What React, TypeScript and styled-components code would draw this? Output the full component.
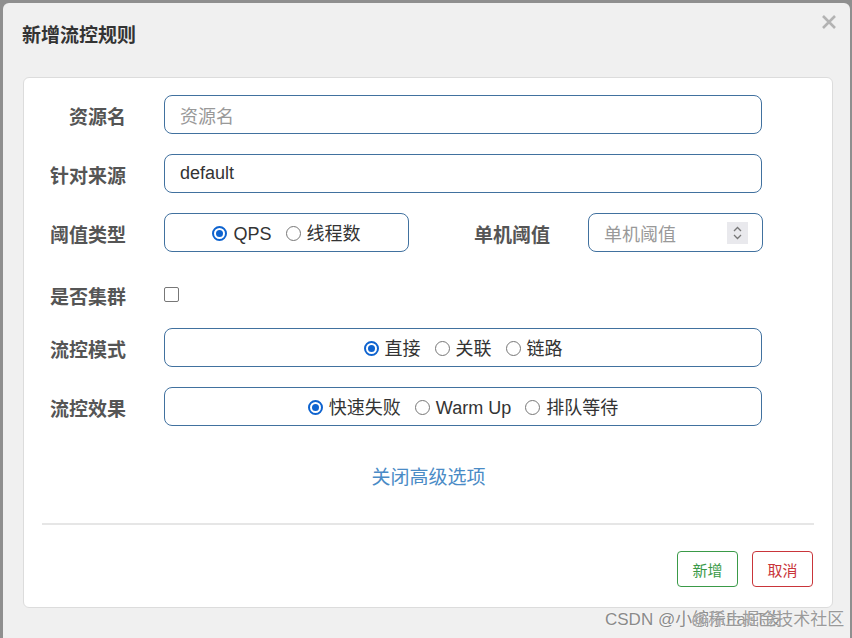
import React from "react";
import styled, { createGlobalStyle } from "styled-components";

const GlobalStyle = createGlobalStyle`
	html, body {
		margin: 0;
		padding: 0;
		background: #8f8f8f;
		overflow: hidden;
		font-family: "Liberation Sans", "Noto Sans CJK SC", sans-serif;
	}
`;

const Page = styled.div`
	width: 852px;
	height: 638px;
	padding: 3px 0 0 3px;
	box-sizing: border-box;
	overflow: hidden;
	position: relative;
`;

const Modal = styled.div`
	width: 847px;
	height: 680px;
	background: #f0f0f0;
	border-radius: 6px;
	box-sizing: border-box;
`;

const Header = styled.div`
	height: 74px;
	display: flex;
	justify-content: space-between;
	align-items: flex-start;
	padding: 20px 13px 0 19px;
	box-sizing: border-box;
`;

const Title = styled.h4`
	margin: 0;
	font-size: 19px;
	line-height: 26px;
	font-weight: 700;
	color: #333;
`;

const Close = styled.button`
	border: none;
	background: none;
	padding: 0;
	margin-top: -9px;
	width: 16px;
	height: 16px;
	cursor: pointer;
`;

const Card = styled.div`
	margin-left: 20px;
	width: 810px;
	height: 531px;
	background: #fff;
	border: 1px solid #dcdcdc;
	border-radius: 6px;
	box-sizing: border-box;
	padding: 17px 0 0 0;
`;

const Form = styled.div`
	display: flex;
	flex-direction: column;
	gap: 20px;
`;

const Row = styled.div<{ $h?: number; $pt?: number }>`
	display: flex;
	align-items: center;
	height: ${(p) => p.$h ?? 39}px;
	padding-top: ${(p) => p.$pt ?? 0}px;
	box-sizing: border-box;
`;

const Label = styled.label<{ $w?: number }>`
	width: ${(p) => p.$w ?? 102}px;
	margin-right: 38px;
	text-align: right;
	font-size: 19px;
	font-weight: 700;
	color: #555;
	flex-shrink: 0;
	padding-top: 2px;
`;

const Box = styled.div<{ $w: number; $center?: boolean }>`
	width: ${(p) => p.$w}px;
	height: 39px;
	border: 1px solid #41719f;
	border-radius: 8px;
	box-sizing: border-box;
	display: flex;
	align-items: center;
	justify-content: ${(p) => (p.$center ? "center" : "flex-start")};
	padding: 0 15px;
	font-size: 18px;
	color: #333;
`;

const Placeholder = styled.span`
	color: #999;
	flex: 1;
`;

const Spinner = styled.span`
	width: 21px;
	height: 22px;
	background: #e9e9ed;
	display: flex;
	align-items: center;
	justify-content: center;
	margin-right: -1px;
`;

const RadioGroup = styled.div`
	display: flex;
	align-items: center;
	gap: 14px;
	padding-top: 2px;
`;

const RadioItem = styled.span`
	display: flex;
	align-items: center;
	gap: 6px;
	font-size: 18px;
	line-height: 22px;
	color: #333;
`;

const RadioText = styled.span`
	display: block;
	line-height: 22px;
`;

const Circle = styled.span<{ $on?: boolean }>`
	width: 15px;
	height: 15px;
	border-radius: 50%;
	box-sizing: border-box;
	border: ${(p) => (p.$on ? "2px solid #0e63cf" : "1.5px solid #777")};
	display: flex;
	align-items: center;
	justify-content: center;
	&::after {
		content: "";
		display: ${(p) => (p.$on ? "block" : "none")};
		width: 7px;
		height: 7px;
		border-radius: 50%;
		background: #0e63cf;
	}
`;

const Check = styled.span`
	width: 15px;
	height: 15px;
	border: 1.5px solid #777;
	border-radius: 2px;
	box-sizing: border-box;
	margin-top: 1px;
`;

const LinkRow = styled.div`
	margin-top: 40px;
	text-align: center;
	font-size: 19px;
	line-height: 24px;
	color: #4a8bc6;
	padding-left: 1px;
`;

const Divider = styled.hr`
	margin: 33px 18px 0 18px;
	border: none;
	border-top: 2px solid #e6e6e6;
`;

const Footer = styled.div`
	display: flex;
	justify-content: flex-end;
	gap: 14px;
	margin-top: 26px;
	padding-right: 19px;
`;

const Btn = styled.button<{ $c: string }>`
	width: 61px;
	height: 36px;
	background: #fff;
	border: 1px solid ${(p) => p.$c};
	color: ${(p) => p.$c};
	border-radius: 4px;
	font-family: "Liberation Sans", "Noto Sans CJK SC", sans-serif;
	font-size: 15px;
	padding: 0;
`;

const Watermark = styled.div`
	position: absolute;
	left: 605px;
	top: 609px;
	font-size: 17px;
	line-height: 22px;
	color: #8a8a8a;
	white-space: nowrap;
	text-shadow: 0 0 2px #fff;
`;

const Over = styled.span`
	position: absolute;
	left: 86px;
	top: 0;
	color: #9a9a9a;
`;

type Opt = { text: string; on?: boolean };

function Radios({ items }: { items: Opt[] }) {
	return (
		<RadioGroup>
			{items.map((o) => (
				<RadioItem key={o.text}>
					<Circle $on={o.on} />
					<RadioText>{o.text}</RadioText>
				</RadioItem>
			))}
		</RadioGroup>
	);
}

export default function App() {
	return (
		<Page>
			<GlobalStyle />
			<Modal>
				<Header>
					<Title>新增流控规则</Title>
					<Close aria-label="close">
						<svg width="16" height="16" viewBox="0 0 16 16">
							<path d="M2 2L14 14M14 2L2 14" stroke="#b3b3b3" strokeWidth="2.6" />
						</svg>
					</Close>
				</Header>
				<Card>
					<Form>
						<Row>
							<Label>资源名</Label>
							<Box $w={598}>
								<Placeholder>资源名</Placeholder>
							</Box>
						</Row>
						<Row>
							<Label>针对来源</Label>
							<Box $w={598}>default</Box>
						</Row>
						<Row>
							<Label>阈值类型</Label>
							<Box $w={245} $center>
								<Radios items={[{ text: "QPS", on: true }, { text: "线程数" }]} />
							</Box>
							<Label $w={141}>单机阈值</Label>
							<Box $w={175}>
								<Placeholder>单机阈值</Placeholder>
								<Spinner>
									<svg width="11" height="16" viewBox="0 0 11 16">
										<path d="M2 6L5.5 2.5L9 6M2 10L5.5 13.5L9 10" fill="none" stroke="#777" strokeWidth="1.3" />
									</svg>
								</Spinner>
							</Box>
						</Row>
						<Row $h={36} $pt={8}>
							<Label>是否集群</Label>
							<Check />
						</Row>
						<Row>
							<Label>流控模式</Label>
							<Box $w={598} $center>
								<Radios items={[{ text: "直接", on: true }, { text: "关联" }, { text: "链路" }]} />
							</Box>
						</Row>
						<Row>
							<Label>流控效果</Label>
							<Box $w={598} $center>
								<Radios items={[{ text: "快速失败", on: true }, { text: "Warm Up" }, { text: "排队等待" }]} />
							</Box>
						</Row>
					</Form>
					<LinkRow>关闭高级选项</LinkRow>
					<Divider />
					<Footer>
						<Btn $c="#3a9a48">新增</Btn>
						<Btn $c="#c9353a">取消</Btn>
					</Footer>
				</Card>
			</Modal>
			<Watermark>
				CSDN @小编乐Fa8T发
				<Over>@稀土掘金技术社区</Over>
			</Watermark>
		</Page>
	);
}
